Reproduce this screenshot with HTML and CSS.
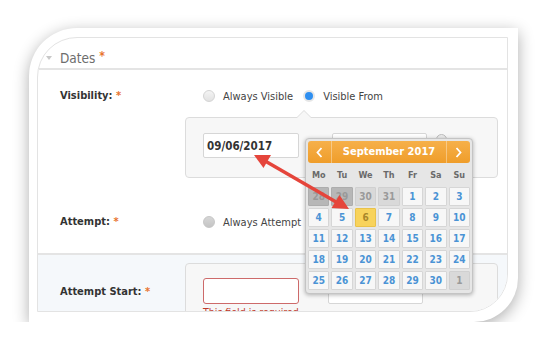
FILE: index.html
```html
<!DOCTYPE html>
<html lang="en">
<head>
    <meta charset="UTF-8">
    <title>Dates</title>
    <link rel="stylesheet" href="styles.css">
</head>
<body>

<div class="frame">
    <div class="shot">
        <div class="head">
            <span class="caret"></span>
            <span class="title">Dates</span>
            <span class="req big">*</span>
        </div>

        <div class="row vis">
            <div class="label">Visibility: <span class="req">*</span></div>
            <div class="ctrl">
                <div class="radios">
                    <span class="radio"></span><span class="opt">Always Visible</span>
                    <span class="radio on"></span><span class="opt">Visible From</span>
                </div>
                <div class="panel notch">
                    <div class="input">09/06/2017</div>
                    <div class="input second"></div>
                    <span class="clock"></span>
                </div>
            </div>
        </div>

        <div class="row att">
            <div class="label">Attempt: <span class="req">*</span></div>
            <div class="radios">
                <span class="radio off"></span><span class="opt">Always Attempt</span>
            </div>
        </div>

        <div class="alt">
            <div class="row start">
                <div class="label">Attempt Start: <span class="req">*</span></div>
                <div class="panel tall">
                    <div class="field">
                        <div class="input bad"></div>
                        <div class="error">This field is required</div>
                    </div>
                    <div class="input second low"></div>
                </div>
            </div>
        </div>

        <div class="calendar">
            <div class="cal-head">
                <span class="nav"><svg width="7" height="11" viewBox="0 0 7 11"><polyline points="5.5,1 1.5,5.5 5.5,10" fill="none" stroke="#fff" stroke-width="1.8"/></svg></span>
                <span class="month">September 2017</span>
                <span class="nav next"><svg width="7" height="11" viewBox="0 0 7 11"><polyline points="1.5,1 5.5,5.5 1.5,10" fill="none" stroke="#fff" stroke-width="1.8"/></svg></span>
            </div>
            <div class="dow">
                <span>Mo</span><span>Tu</span><span>We</span><span>Th</span><span>Fr</span><span>Sa</span><span>Su</span>
            </div>
            <div class="days">
                <span class="day prev dark">28</span><span class="day prev dark">29</span><span class="day prev">30</span><span class="day prev">31</span><span class="day">1</span><span class="day">2</span><span class="day">3</span>
                <span class="day">4</span><span class="day">5</span><span class="day today">6</span><span class="day">7</span><span class="day">8</span><span class="day">9</span><span class="day">10</span>
                <span class="day">11</span><span class="day">12</span><span class="day">13</span><span class="day">14</span><span class="day">15</span><span class="day">16</span><span class="day">17</span>
                <span class="day">18</span><span class="day">19</span><span class="day">20</span><span class="day">21</span><span class="day">22</span><span class="day">23</span><span class="day">24</span>
                <span class="day">25</span><span class="day">26</span><span class="day">27</span><span class="day">28</span><span class="day">29</span><span class="day">30</span><span class="day prev">1</span>
            </div>
        </div>
    </div>
</div>

<svg class="arrow" width="546" height="351" viewBox="0 0 546 351">
    <line x1="266" y1="161.5" x2="337" y2="202.5" stroke="#e5453b" stroke-width="3.5"/>
    <polygon points="254,155 263.5,168 271,155" fill="#e5453b"/>
    <polygon points="349,209 331.5,208 339.5,195" fill="#e5453b"/>
</svg>

</body>
</html>
```

FILE: styles.css
```css
body {
    margin: 0;
    background-color: #fff;
    font-family: "DejaVu Sans Condensed", "Liberation Sans", sans-serif;
    color: #333;
}
.frame {
    margin: 28px 0 0 29px;
    width: 489px;
    height: 294px;
    box-sizing: border-box;
    padding: 9px 10px 10px 8px;
    background-color: #fff;
    border-radius: 48px 0 44px 0;
    box-shadow: 0 4px 16px rgba(0, 0, 0, 0.32);
}
.shot {
    position: relative;
    height: 100%;
    box-sizing: border-box;
    border: 1px solid #e3e3e3;
    border-radius: 40px 0 38px 0;
    overflow: hidden;
    background-color: #fff;
}
.head {
    display: flex;
    align-items: center;
    height: 20px;
    padding: 10px 0 0 8px;
    border-bottom: 2px solid #e4e4e4;
}
.caret {
    width: 0;
    height: 0;
    border-left: 3px solid transparent;
    border-right: 3px solid transparent;
    border-top: 4px solid #c8c8c8;
    margin-right: 8px;
}
.title {
    font-size: 13.5px;
    color: #6d6d6d;
}
.req {
    color: #e8742e;
    font-weight: bold;
}
.req.big {
    margin-left: 4px;
    font-size: 12px;
    align-self: flex-start;
    margin-top: 1px;
}
.row {
    display: grid;
    grid-template-columns: 125px 1fr;
    padding: 0 9px 0 22px;
}
.row.vis {
    padding-top: 19px;
}
.row.att {
    padding-top: 37px;
    padding-bottom: 24px;
    border-bottom: 2px solid #e4e4e4;
}
.label {
    font-size: 11px;
    font-weight: bold;
    line-height: 14px;
    color: #333;
}
.radios {
    display: flex;
    align-items: center;
    height: 14px;
    padding-left: 18px;
    font-size: 11px;
    color: #444;
}
.radio {
    width: 12px;
    height: 12px;
    box-sizing: border-box;
    border-radius: 50%;
    border: 1px solid #d4d4d4;
    background: linear-gradient(#f4f4f4, #e2e2e2);
}
.radio.on {
    border: 2px solid #e6e6e6;
    background: #2f8ff0;
}
.radio.off {
    border: 1px solid #c6c6c6;
    background: linear-gradient(#d6d6d6, #c4c4c4);
}
.opt {
    margin-left: 8px;
    margin-right: 10px;
}
.panel {
    display: flex;
    align-items: flex-start;
    position: relative;
    margin-top: 14px;
    height: 61px;
    box-sizing: border-box;
    padding: 15px 0 0 17px;
    background-color: #f7f7f7;
    border: 1px solid #dcdcdc;
    border-radius: 4px;
}
.notch::before,
.notch::after {
    content: "";
    position: absolute;
    left: 110px;
    border-left: 8px solid transparent;
    border-right: 8px solid transparent;
}
.notch::before {
    top: -8px;
    border-bottom: 8px solid #dcdcdc;
}
.notch::after {
    top: -7px;
    border-bottom: 8px solid #f7f7f7;
}
.input {
    width: 96px;
    height: 25px;
    box-sizing: border-box;
    padding-left: 3px;
    background-color: #fff;
    border: 1px solid #d6d6d6;
    border-radius: 2px;
    font-size: 11.5px;
    font-weight: bold;
    line-height: 24px;
    color: #333;
}
.input.second {
    margin-left: 33px;
    width: 95px;
}
.clock {
    width: 11px;
    height: 11px;
    box-sizing: border-box;
    margin: 1px 0 0 9px;
    border-radius: 50%;
    border: 1px solid #bdbdbd;
    background-color: #ececec;
}
.alt {
    background-color: #f5f8fb;
    height: 100px;
}
.row.start {
    padding-top: 8px;
}
.row.start .label {
    margin-top: 22px;
}
.panel.tall {
    margin-top: 0;
    height: 90px;
    padding-top: 14px;
}
.input.bad {
    height: 26px;
    border-color: #cd6a6a;
    border-radius: 3px;
}
.input.low {
    height: 26px;
    margin-left: 29px;
}
.error {
    margin-top: 2px;
    font-size: 10.5px;
    color: #c0392b;
}
.calendar {
    position: absolute;
    left: 267px;
    top: 100px;
    width: 168px;
    height: 156px;
    box-sizing: border-box;
    padding: 2px;
    background-color: #e6e6e6;
    border: 1px solid #c4c4c4;
    border-radius: 4px;
    box-shadow: 0 1px 4px rgba(0, 0, 0, 0.3);
}
.cal-head {
    display: flex;
    height: 22px;
    border-radius: 3px;
    background: linear-gradient(#f6b04a, #ef9d2a);
    color: #fff;
}
.nav {
    display: flex;
    align-items: center;
    justify-content: center;
    width: 23px;
    border-right: 1px solid rgba(255, 255, 255, 0.35);
}
.nav.next {
    border-right: none;
    border-left: 1px solid rgba(255, 255, 255, 0.35);
}
.month {
    flex: 1;
    text-align: center;
    font-size: 11px;
    font-weight: bold;
    line-height: 22px;
}
.dow {
    display: grid;
    grid-template-columns: repeat(7, 1fr);
    column-gap: 2px;
    align-items: center;
    height: 24px;
    text-align: center;
    font-size: 9px;
    font-weight: bold;
    color: #6a6a6a;
}
.days {
    display: grid;
    grid-template-columns: repeat(7, 1fr);
    grid-auto-rows: 19px;
    gap: 2px;
}
.day {
    display: flex;
    align-items: center;
    justify-content: center;
    background-color: #f7f7f7;
    border: 1px solid #d6d6d6;
    border-radius: 1px;
    font-size: 10px;
    font-weight: bold;
    color: #4a93d5;
}
.day.prev {
    background-color: #d9d9d9;
    border-color: #d0d0d0;
    color: #9a9a9a;
}
.day.dark {
    background-color: #b7b7b7;
    border-color: #adadad;
    color: #999;
}
.day.today {
    background-color: #f8d35c;
    border-color: #e9c24a;
    color: #a9872a;
}
.arrow {
    position: absolute;
    left: 0;
    top: 0;
    pointer-events: none;
}
```
